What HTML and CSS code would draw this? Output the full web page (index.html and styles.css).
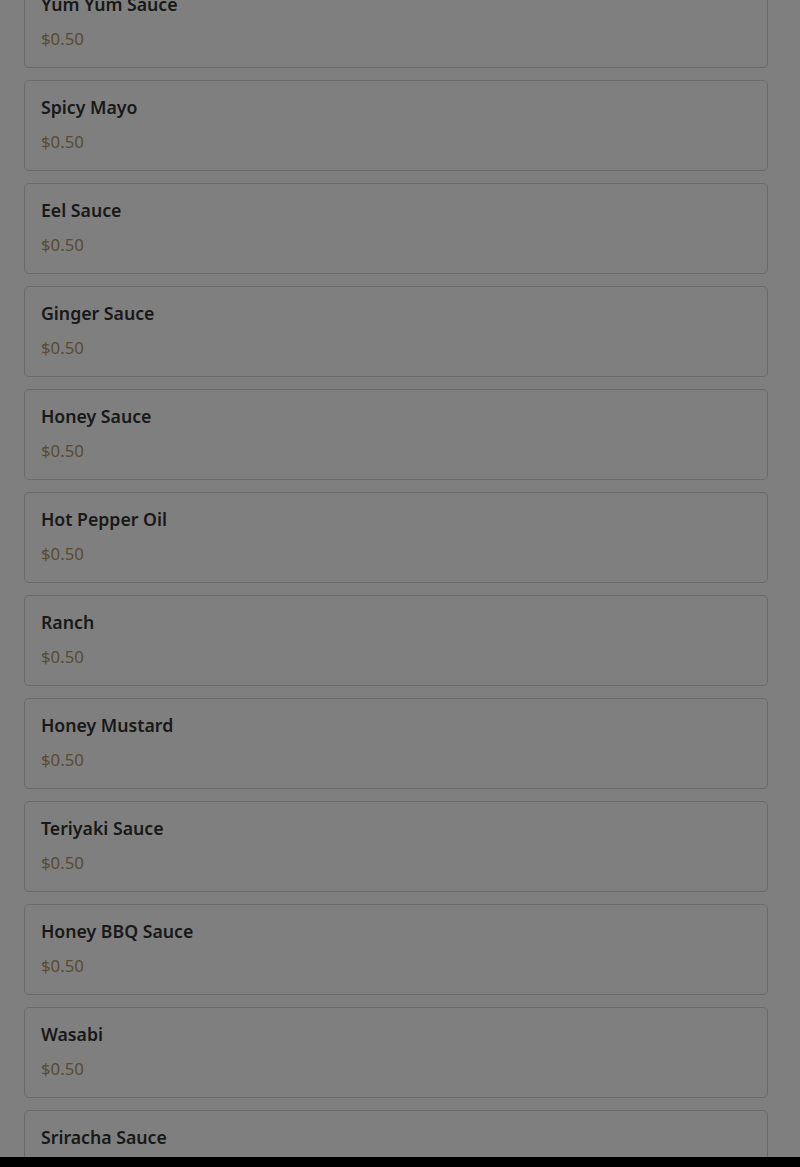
FILE: index.html
```html
<!DOCTYPE html>
<html lang="en">
<head>
<meta charset="utf-8">
<title>Sauces</title>
<link rel="stylesheet" href="styles.css">
</head>
<body>
<main class="list">
  <div class="card"><div class="name">Yum Yum Sauce</div><div class="price">$0.50</div></div>
  <div class="card"><div class="name">Spicy Mayo</div><div class="price">$0.50</div></div>
  <div class="card"><div class="name">Eel Sauce</div><div class="price">$0.50</div></div>
  <div class="card"><div class="name">Ginger Sauce</div><div class="price">$0.50</div></div>
  <div class="card"><div class="name">Honey Sauce</div><div class="price">$0.50</div></div>
  <div class="card"><div class="name">Hot Pepper Oil</div><div class="price">$0.50</div></div>
  <div class="card"><div class="name">Ranch</div><div class="price">$0.50</div></div>
  <div class="card"><div class="name">Honey Mustard</div><div class="price">$0.50</div></div>
  <div class="card"><div class="name">Teriyaki Sauce</div><div class="price">$0.50</div></div>
  <div class="card"><div class="name">Honey BBQ Sauce</div><div class="price">$0.50</div></div>
  <div class="card"><div class="name">Wasabi</div><div class="price">$0.50</div></div>
  <div class="card"><div class="name">Sriracha Sauce</div><div class="price">$0.50</div></div>
</main>
<div class="overlay"></div>
<div class="bottom-bar"></div>
</body>
</html>
```
FILE: styles.css
```css
html, body {
  margin: 0;
  padding: 0;
  background: #ffffff;
  height: 1167px;
  overflow: hidden;
}
body {
  font-family: "Noto Sans", "Open Sans", sans-serif;
}
.list {
  display: flex;
  flex-direction: column;
  gap: 12px;
  padding: 0 32px 0 24px;
  margin-top: -23px;
}
.card {
  border: 1px solid #d2d2d2;
  border-radius: 5px;
  padding: 14px 16px 17px;
  display: flex;
  flex-direction: column;
  gap: 12px;
  background: #ffffff;
}
.name {
  font-size: 17.7px;
  font-weight: 600;
  line-height: 24px;
  color: #333333;
}
.price {
  font-size: 16.8px;
  line-height: 22px;
  color: #b39563;
}
.overlay {
  position: fixed;
  inset: 0;
  background: rgba(0, 0, 0, 0.5);
}
.bottom-bar {
  position: fixed;
  left: 0;
  right: 0;
  bottom: 0;
  height: 10px;
  background: #000000;
}
```
